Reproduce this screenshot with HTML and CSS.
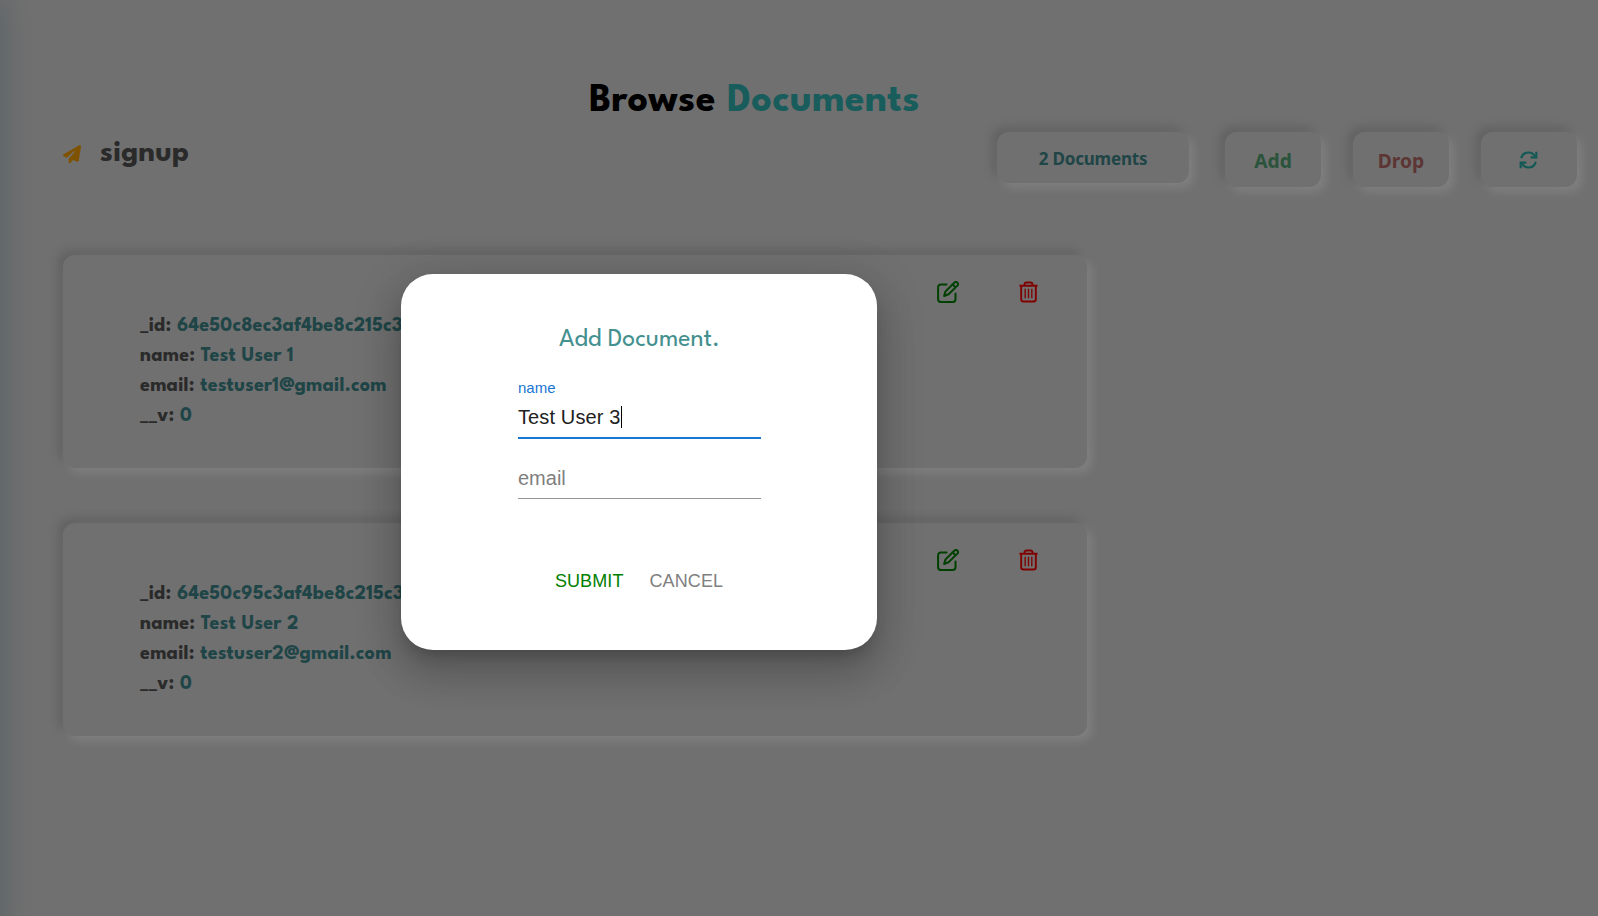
FILE: index.html
```html
<!DOCTYPE html>
<html lang="en">
<head>
<meta charset="utf-8">
<title>Browse Documents</title>
<link rel="stylesheet" href="styles.css">
</head>
<body>
<div class="edge"></div>
<main class="page">
  <h1 class="title">Browse <span class="accent">Documents</span></h1>
  <div class="toolbar">
    <div class="collection">
      <svg class="plane" viewBox="0 0 512 512"><path fill="#ffa500" d="M498.100 5.600c10.100 7 15.400 19.100 13.500 31.200l-64 416c-1.500 9.700-7.400 18.200-16 23s-18.900 5.400-28 1.600L284 427.700l-68.500 74.100c-8.900 9.700-22.900 12.900-35.200 8.100S160 493.200 160 480V396.400c0-4 1.500-7.800 4.200-10.700L331.800 202.800c5.800-6.300 5.600-16-.4-22s-15.700-6.400-22-.7L106 360.800 17.700 316.600C7.100 311.300 .3 300.700 0 288.900s5.900-22.800 16.100-28.700l448-256c10.700-6.100 23.900-5.500 34 1.400z"/></svg>
      <span class="name">signup</span>
    </div>
    <div class="actions">
      <div class="btn count">2 Documents</div>
      <div class="btn add">Add</div>
      <div class="btn drop">Drop</div>
      <div class="btn refresh">
        <svg viewBox="0 0 20 20" fill="none" stroke="#20b2aa" stroke-width="2.400"><path d="M2 8C2.800 4 6 1.700 10 1.700c3.200 0 5.600 1.500 7.200 4.200M18 12c-.8 4-4 6.300-8 6.300-3.200 0-5.600-1.500-7.200-4.200"/><path d="M18.700.8v6.300h-6.300M1.300 19.200v-6.300h6.300"/></svg>
      </div>
    </div>
  </div>
  <section class="cards">
    <article class="card">
      <dl class="fields">
        <div><dt>_id:</dt> <dd>64e50c8ec3af4be8c215c3</dd></div>
        <div><dt>name:</dt> <dd>Test User 1</dd></div>
        <div><dt>email:</dt> <dd>testuser1@gmail.com</dd></div>
        <div><dt>__v:</dt> <dd>0</dd></div>
      </dl>
      <div class="tools">
        <svg class="edit" viewBox="0 0 22 22" fill="none" stroke="#008000" stroke-width="2" stroke-linejoin="round" stroke-linecap="round"><path d="M9.500 3.500H3.800A2.700 2.700 0 0 0 1.100 6.200v12A2.700 2.700 0 0 0 3.800 20.900h12a2.700 2.700 0 0 0 2.700-2.700v-5.700"/><path d="M17.300 1.700a1.900 1.900 0 0 1 3.100 2.900L11.500 13.300 7.100 15l1.400-4.600zM15.500 3.300l3 2.900"/></svg>
        <svg class="trash" viewBox="0 0 20 22" fill="none" stroke="#f00" stroke-width="2"><path d="M.5 4.400h19M2.300 4.400v14.200a2.400 2.400 0 0 0 2.400 2.400h10.600a2.400 2.400 0 0 0 2.400-2.400V4.400M5.800 4.200V2.900A1.900 1.900 0 0 1 7.700 1h4.600a1.900 1.900 0 0 1 1.900 1.900v1.300"/><path stroke-width="1.400" d="M6.500 7.500v10M10 7.500v10M13.500 7.500v10"/></svg>
      </div>
    </article>
    <article class="card">
      <dl class="fields">
        <div><dt>_id:</dt> <dd>64e50c95c3af4be8c215c3</dd></div>
        <div><dt>name:</dt> <dd>Test User 2</dd></div>
        <div><dt>email:</dt> <dd>testuser2@gmail.com</dd></div>
        <div><dt>__v:</dt> <dd>0</dd></div>
      </dl>
      <div class="tools">
        <svg class="edit" viewBox="0 0 22 22" fill="none" stroke="#008000" stroke-width="2" stroke-linejoin="round" stroke-linecap="round"><path d="M9.500 3.500H3.800A2.700 2.700 0 0 0 1.100 6.200v12A2.700 2.700 0 0 0 3.800 20.900h12a2.700 2.700 0 0 0 2.700-2.700v-5.700"/><path d="M17.300 1.700a1.900 1.900 0 0 1 3.100 2.900L11.500 13.300 7.100 15l1.400-4.600zM15.500 3.300l3 2.900"/></svg>
        <svg class="trash" viewBox="0 0 20 22" fill="none" stroke="#f00" stroke-width="2"><path d="M.5 4.400h19M2.300 4.400v14.200a2.400 2.400 0 0 0 2.400 2.400h10.600a2.400 2.400 0 0 0 2.400-2.400V4.400M5.800 4.200V2.900A1.900 1.900 0 0 1 7.700 1h4.600a1.900 1.900 0 0 1 1.900 1.900v1.300"/><path stroke-width="1.400" d="M6.500 7.500v10M10 7.500v10M13.500 7.500v10"/></svg>
      </div>
    </article>
  </section>
</main>
<div class="backdrop">
  <div class="dialog" role="dialog">
    <h2 class="dialog-title">Add Document.</h2>
    <div class="field focused">
      <div class="label">name</div>
      <div class="value">Test User 3<span class="caret"></span></div>
    </div>
    <div class="field"><div class="value placeholder">email</div></div>
    <div class="dialog-actions"><span class="submit">SUBMIT</span><span class="cancel">CANCEL</span></div>
  </div>
</div>
</body>
</html>
```
FILE: styles.css
```css
* { box-sizing: border-box; }
body {
  margin: 0;
  height: 916px;
  overflow: hidden;
  background: #e0e0e0;
  font-family: "League Spartan", Lato, sans-serif;
}
.edge {
  position: absolute;
  left: -20px;
  top: 0;
  width: 20px;
  height: 940px;
  box-shadow: 0 0 30px rgba(0, 100, 130, .3);
}
.page { padding: 80px 21px 0 63px; }
.title {
  margin: 0 0 0 526px;
  font-size: 40px;
  font-weight: 700;
  line-height: 44px;
  letter-spacing: .36px;
  color: #000;
}
.accent { color: #33b9b9; }
.toolbar {
  display: flex;
  justify-content: space-between;
  height: 131px;
  padding-top: 8px;
}
.collection { display: flex; align-items: flex-start; }
.plane { width: 18px; height: 18px; margin: 13px 19px 0 0; }
.name {
  font-size: 30px;
  font-weight: 700;
  line-height: 32px;
  margin-top: 6px;
  letter-spacing: .25px;
  color: #555;
}
.actions { display: flex; align-items: flex-start; gap: 32px; }
.btn {
  display: flex;
  align-items: center;
  justify-content: center;
  width: 96px;
  height: 55px;
  padding-top: 2px;
  border-radius: 12px;
  font: 700 19.200px "Segoe UI", "Noto Sans", sans-serif;
  background: #e0e0e0;
}
.btn, .card { box-shadow: 5px 5px 10px #fff, -5px -5px 10px #c3c3c3; }
.count { width: 192px; height: 51px; margin-right: 4px; font-size: 17px; letter-spacing: -.2px; color: #3f8a8f; }
.add { color: #54a878; }
.drop { color: #b86b68; }
.refresh { padding-right: 2px; padding-top: 1px; }
.refresh svg { width: 19px; height: 18px; }
.cards { display: flex; flex-direction: column; gap: 55px; width: 1024px; }
.card {
  display: flex;
  justify-content: space-between;
  height: 213px;
  border-radius: 12px;
  background: #e0e0e0;
  padding: 26px 49px 0 77px;
}
.fields { margin: 30px 0 0; font-size: 20px; font-weight: 700; line-height: 30px; letter-spacing: .22px; color: #555; }
.fields div { height: 30px; white-space: nowrap; }
.fields dt, .fields dd { display: inline; margin: 0; }
.fields dd { color: #3f8a8f; }
.tools { display: flex; gap: 60px; }
.edit { width: 22px; height: 22px; }
.trash { width: 19px; height: 22px; }
.backdrop { position: absolute; inset: 0; background: rgba(0, 0, 0, .5); }
.dialog {
  width: 476px;
  height: 376px;
  margin: 274px 0 0 401px;
  padding: 50px 116px 0 117px;
  border-radius: 32px;
  background: #fff;
  box-shadow: 0 11px 15px -7px rgba(0, 0, 0, .2), 0 24px 38px 3px rgba(0, 0, 0, .14), 0 9px 46px 8px rgba(0, 0, 0, .12);
  font-family: "Liberation Sans", Arial, sans-serif;
}
.dialog-title {
  margin: 0;
  text-align: center;
  font: 400 25.6px/32px "League Spartan", Lato, sans-serif;
  color: #44908f;
}
.field { height: 61px; padding-top: 26px; border-bottom: 1px solid #949494; font-size: 20px; line-height: 28px; color: #212121; }
.field.focused { height: 63px; margin-top: 20px; padding-top: 0; border-bottom: 2px solid #1976d2; margin-bottom: -1px; }
.label { height: 27px; font-size: 15px; line-height: 24px; color: #1976d2; }
.value { display: flex; height: 28px; align-items: center; letter-spacing: .12px; }
.caret { width: 1px; height: 22px; margin-left: 1px; background: #000; }
.placeholder { color: #7f7f7f; letter-spacing: 0; }
.dialog-actions { display: flex; justify-content: center; gap: 26px; margin: 70px 1px 0 0; font-size: 18px; line-height: 24px; letter-spacing: .1px; }
.submit { color: #008000; }
.cancel { color: #808080; }
```
